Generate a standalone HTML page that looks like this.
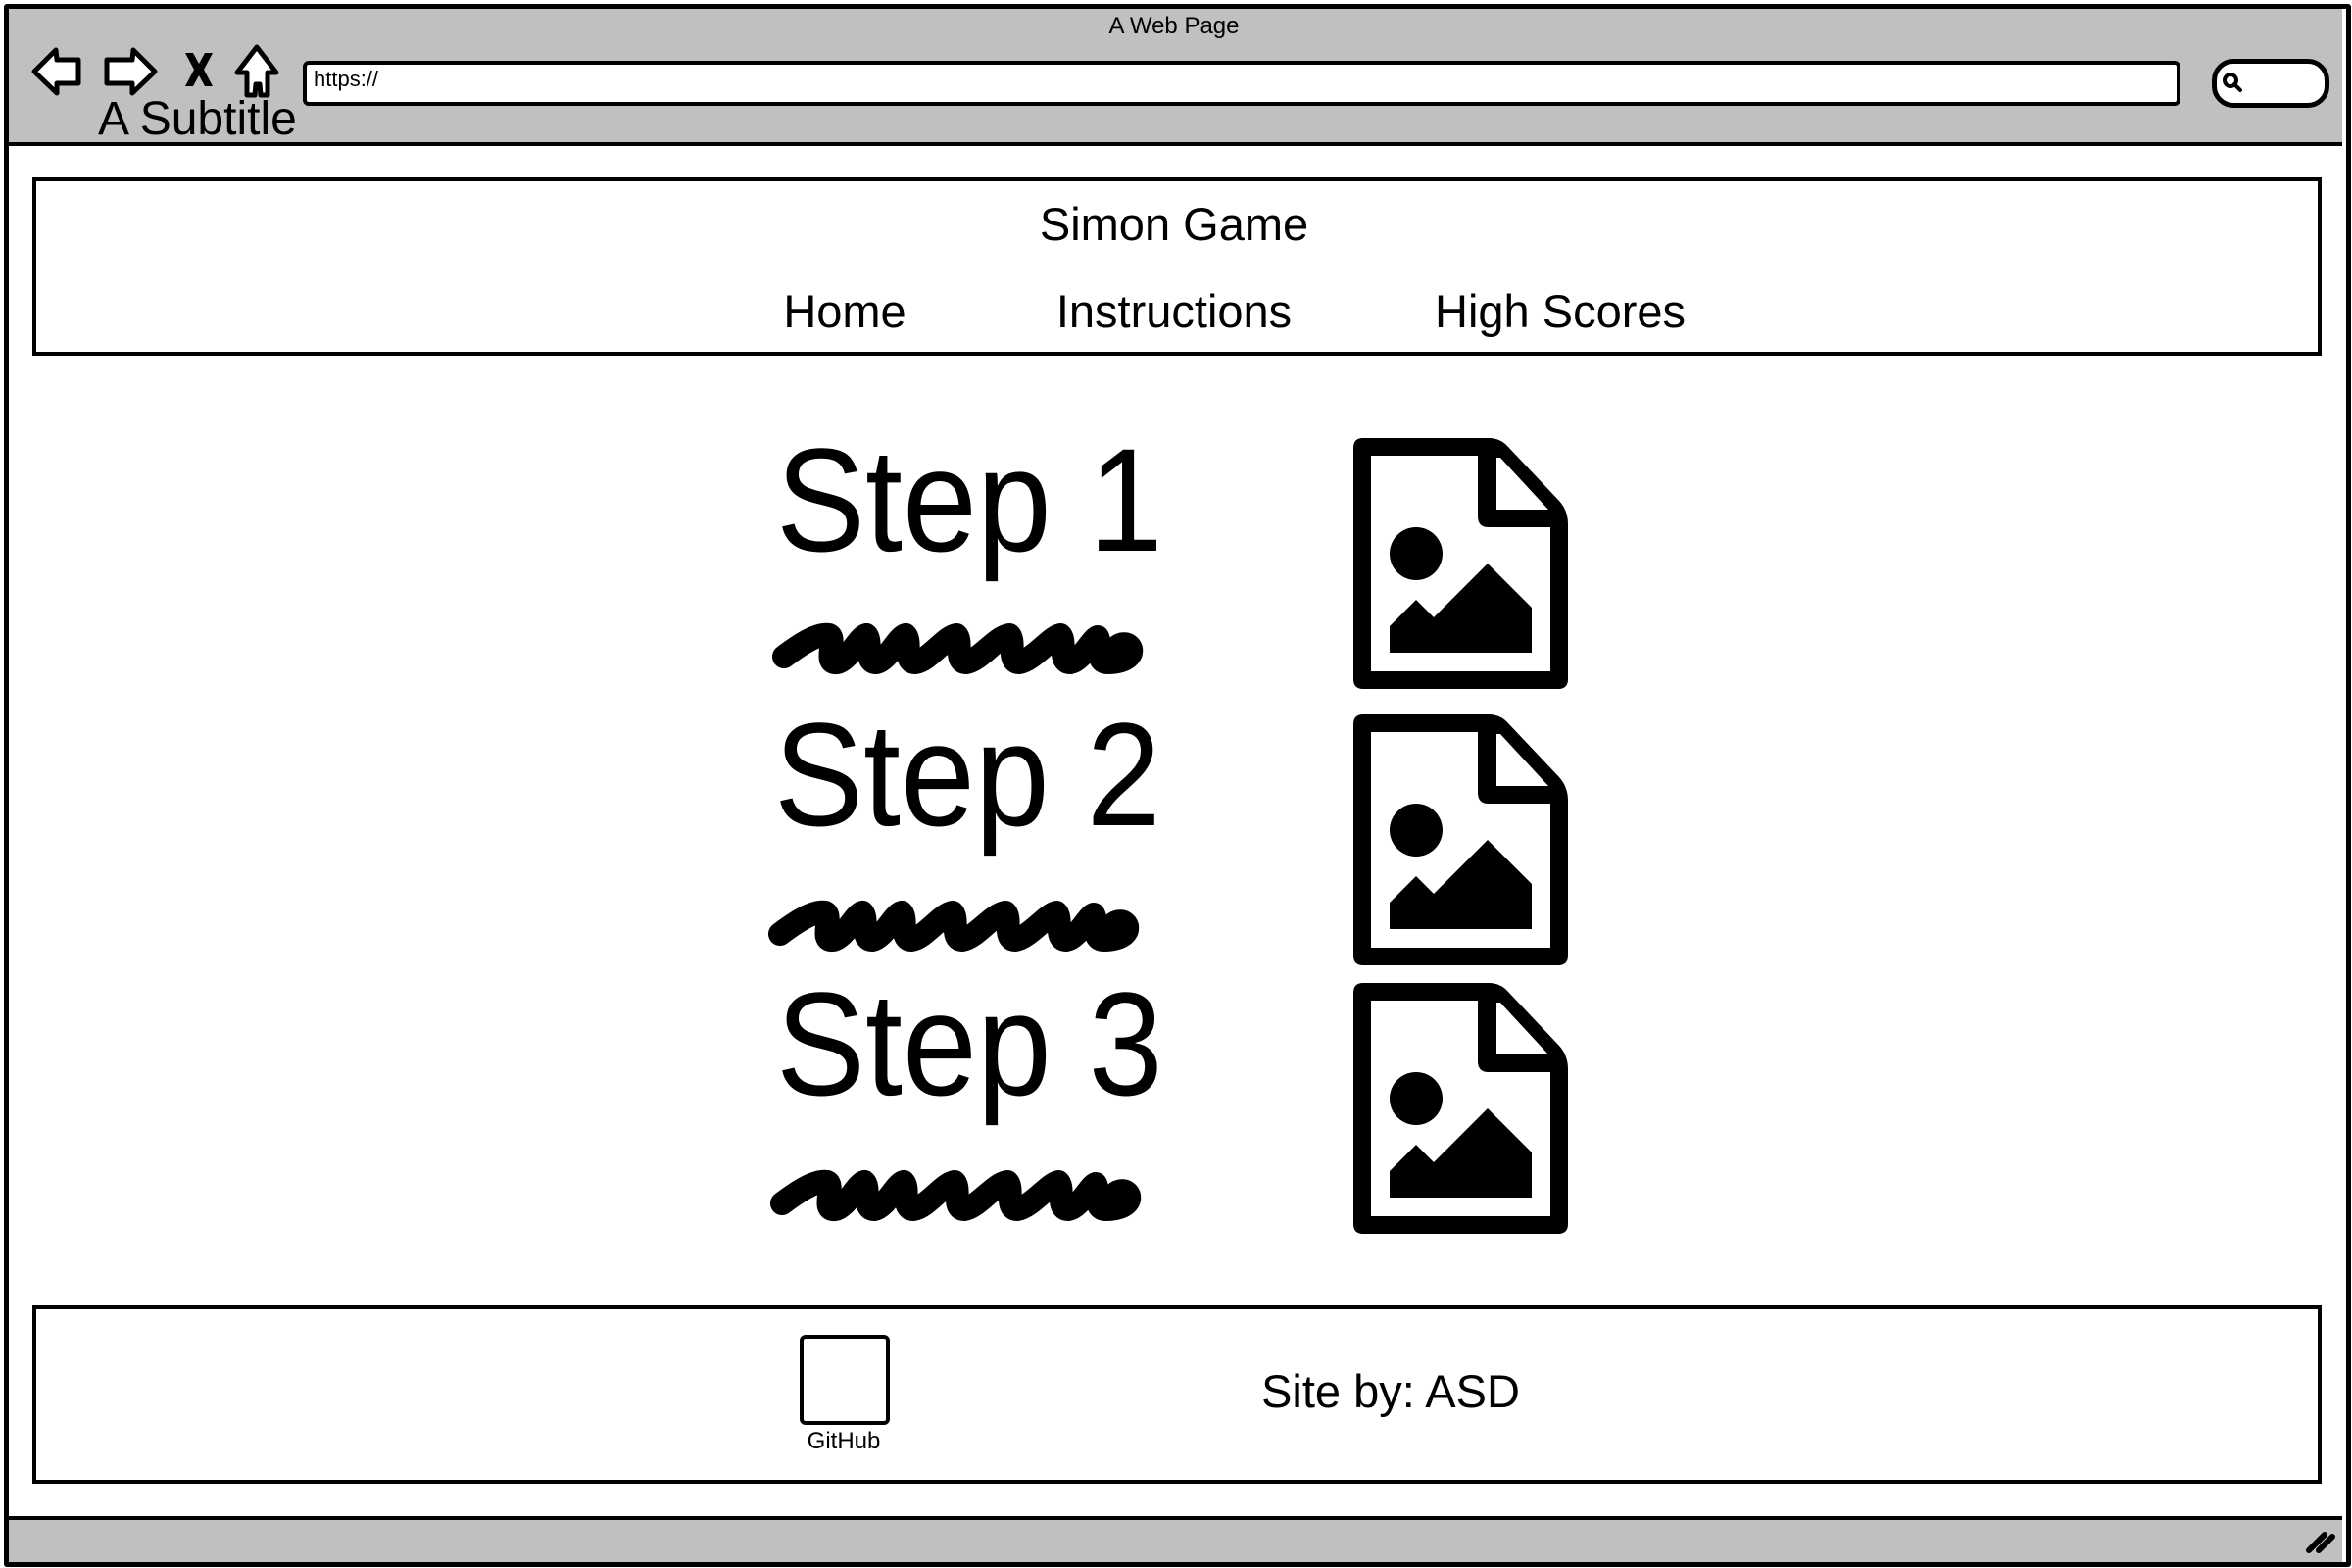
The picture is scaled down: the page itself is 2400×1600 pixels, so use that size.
<!DOCTYPE html>
<html><head><meta charset="utf-8"><style>
html,body{margin:0;padding:0;width:2400px;height:1600px;background:#fff;overflow:hidden}
body{position:relative;font-family:"Liberation Sans",sans-serif;color:#000}
.a{position:absolute;line-height:1;white-space:nowrap}
.c{transform:translateX(-50%)}
.s{transform:scaleX(0.91);transform-origin:0 0}
</style></head><body>
<!-- frame -->
<div class="a" style="left:4px;top:4px;width:2385px;height:1585px;border:5px solid #000;border-radius:3px"></div>
<div class="a" style="left:9px;top:9px;width:2381px;height:136px;background:#c0c0c0;border-bottom:4px solid #000"></div>
<div class="a" style="left:9px;top:1547px;width:2381px;height:43px;background:#c0c0c0;border-top:4px solid #000"></div>
<svg class="a" style="left:2350px;top:1560px" width="36" height="26"><path d="M6 22 L22 6 M16 22 L30 8" stroke="#000" stroke-width="6" stroke-linecap="round"/></svg>
<div class="a c" style="left:1198px;top:15px;font-size:24px">A Web Page</div>
<!-- nav icons -->
<svg class="a" style="left:0;top:0" width="310" height="110">
<g fill="#fff" stroke="#000" stroke-width="5" stroke-linejoin="round">
<path d="M35 73 L57 51 L58 61 L80 61 L80 85 L58 85 L58 95 Z"/>
<path d="M158 73 L136 51 L135 61 L109 61 L109 85 L135 85 L135 95 Z"/>
<path d="M262 48 L242 74 L252 74 L252 97 L260 97 L261 86 L265 86 L266 97 L273 97 L273 74 L282 74 Z"/>
</g>
<path d="M189 54 L197 54 L203 65 L209 54 L217 54 L208 71 L217 88 L209 88 L203 77 L197 88 L189 88 L198 71Z" fill="#000"/>
</svg>
<div class="a" style="left:309px;top:62px;width:1908px;height:38px;background:#fff;border:4px solid #000;border-radius:6px"></div>
<div class="a" style="left:320px;top:70px;font-size:22px">https://</div>
<div class="a" style="left:2257px;top:60px;width:110px;height:40px;background:#fff;border:5px solid #000;border-radius:22px"></div>
<svg class="a" style="left:2264px;top:70px" width="30" height="30"><circle cx="12" cy="12" r="6" fill="none" stroke="#000" stroke-width="4"/><path d="M16 16 L22 22" stroke="#000" stroke-width="4" stroke-linecap="round"/></svg>
<div class="a" style="left:100px;top:98px;font-size:48px">A Subtitle</div>
<!-- header -->
<div class="a" style="left:33px;top:181px;width:2328px;height:174px;border:4px solid #000"></div>
<div class="a c" style="left:1198px;top:205px;font-size:47px">Simon Game</div>
<div class="a c" style="left:862px;top:294px;font-size:47px">Home</div>
<div class="a c" style="left:1198px;top:294px;font-size:47px">Instructions</div>
<div class="a c" style="left:1592px;top:294px;font-size:47px">High Scores</div>
<!-- steps -->
<div class="a s" style="left:792px;top:435px;font-size:150px">Step 1</div>
<div class="a s" style="left:790px;top:715px;font-size:150px">Step 2</div>
<div class="a s" style="left:792px;top:990px;font-size:150px">Step 3</div>
<svg width="0" height="0" style="position:absolute"><defs>
<path id="sc" d="M16 44 C32 32 50 20 62 22 C70 26 56 52 70 50 C82 48 92 24 100 22 C106 28 98 50 110 50 C122 48 132 24 140 22 C146 28 138 50 150 50 C164 48 180 24 192 22 C198 28 190 50 202 50 C216 48 232 24 246 22 C252 28 244 50 256 50 C270 48 288 24 298 22 C304 28 296 50 308 50 C320 48 330 26 336 24 C340 32 334 50 346 50 C358 50 372 46 370 36 C368 30 360 30 356 34" fill="none" stroke="#000" stroke-width="24" stroke-linecap="round" stroke-linejoin="round"/>
<g id="im"><path d="M10 0 H138 Q150 0 158 9 L210 64 Q219 74 219 88 V246 Q219 256 209 256 H10 Q0 256 0 246 V10 Q0 0 10 0Z" fill="#000"/>
<path d="M18 18 H127 V80 Q127 91 138 91 H201 V238 H18Z" fill="#fff"/>
<path d="M146 20 L150 20 L199 73 H146Z" fill="#fff"/>
<ellipse cx="64" cy="118" rx="27" ry="27" fill="#000"/>
<path d="M37 192 L64 165 L82 183 L137 128 L182 173 V219 H37Z" fill="#000"/></g>
</defs></svg>
<svg class="a" style="left:784px;top:626px" width="400" height="66"><use href="#sc"/></svg>
<svg class="a" style="left:780px;top:909px" width="400" height="66"><use href="#sc"/></svg>
<svg class="a" style="left:782px;top:1184px" width="400" height="66"><use href="#sc"/></svg>
<svg class="a" style="left:1381px;top:447px" width="219" height="256"><use href="#im"/></svg>
<svg class="a" style="left:1381px;top:729px" width="219" height="256"><use href="#im"/></svg>
<svg class="a" style="left:1381px;top:1003px" width="219" height="256"><use href="#im"/></svg>
<!-- footer -->
<div class="a" style="left:33px;top:1332px;width:2328px;height:174px;border:4px solid #000"></div>
<div class="a" style="left:816px;top:1362px;width:84px;height:84px;border:4px solid #000;border-radius:6px"></div>
<div class="a c" style="left:861px;top:1459px;font-size:24px">GitHub</div>
<div class="a c" style="left:1419px;top:1396px;font-size:47px">Site by: ASD</div>
</body></html>
